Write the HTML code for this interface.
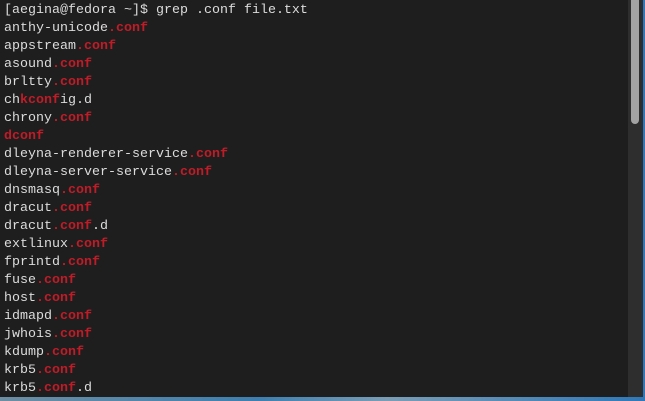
<!DOCTYPE html>
<html><head><style>
html,body{margin:0;padding:0;width:645px;height:401px;overflow:hidden;background:#5a8fb0;}
.bg{position:absolute;left:0;top:0;width:645px;height:401px;background:linear-gradient(90deg,#6d8ea3,#3d7fb0 40%,#7a9db5 60%,#2f78b8);}
.term{position:absolute;left:0;top:0;width:643px;height:397px;background:#1e1e1e;}
.track{position:absolute;left:628px;top:0;width:15px;height:397px;background:#2e2e2e;}
.thumb{position:absolute;left:631px;top:0;width:8px;height:124px;background:#a3a3a3;border-radius:0 0 4px 4px;}
pre{margin:0;position:absolute;left:4px;top:2px;font-family:"Liberation Mono",monospace;font-size:13.33px;line-height:18px;color:#dcdcdc;}
b{color:#c01c28;font-weight:bold;}
</style></head><body>
<div class="bg"></div>
<div class="term"></div>
<div class="track"></div><div class="thumb"></div>
<pre>[aegina@fedora ~]$ grep .conf file.txt
anthy-unicode<b>.conf</b>
appstream<b>.conf</b>
asound<b>.conf</b>
brltty<b>.conf</b>
ch<b>kconf</b>ig.d
chrony<b>.conf</b>
<b>dconf</b>
dleyna-renderer-service<b>.conf</b>
dleyna-server-service<b>.conf</b>
dnsmasq<b>.conf</b>
dracut<b>.conf</b>
dracut<b>.conf</b>.d
extlinux<b>.conf</b>
fprintd<b>.conf</b>
fuse<b>.conf</b>
host<b>.conf</b>
idmapd<b>.conf</b>
jwhois<b>.conf</b>
kdump<b>.conf</b>
krb5<b>.conf</b>
krb5<b>.conf</b>.d</pre>
</body></html>
